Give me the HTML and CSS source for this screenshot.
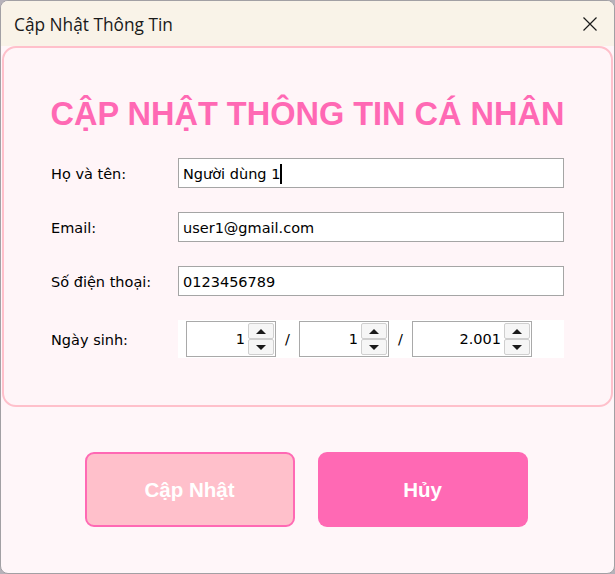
FILE: index.html
```html
<!DOCTYPE html>
<html lang="vi">
<head>
<meta charset="utf-8">
<title>Cập Nhật Thông Tin</title>
<link rel="stylesheet" href="styles.css">
</head>
<body>
<div class="window">
  <div class="titlebar">
    <span class="title">Cập Nhật Thông Tin</span>
    <svg class="close" width="14" height="14" viewBox="0 0 14 14"><path d="M0.5 0.5 L13.5 13.5 M13.5 0.5 L0.5 13.5" stroke="#1a1a1a" stroke-width="1.2" fill="none"/></svg>
  </div>
  <div class="panel">
    <h1 class="heading">CẬP NHẬT THÔNG TIN CÁ NHÂN</h1>
    <div class="form">
      <div class="label">Họ và tên:</div>
      <div class="field">Người dùng 1<span class="caret"></span></div>
      <div class="label">Email:</div>
      <div class="field">user1@gmail.com</div>
      <div class="label">Số điện thoại:</div>
      <div class="field">0123456789</div>
      <div class="label">Ngày sinh:</div>
      <div class="date">
        <div class="spin spin-day"><span class="num">1</span><div class="btns"><div class="btn"><span class="tri-up"></span></div><div class="btn"><span class="tri-down"></span></div></div></div>
        <span class="slash">/</span>
        <div class="spin spin-month"><span class="num">1</span><div class="btns"><div class="btn"><span class="tri-up"></span></div><div class="btn"><span class="tri-down"></span></div></div></div>
        <span class="slash">/</span>
        <div class="spin spin-year"><span class="num">2.001</span><div class="btns"><div class="btn"><span class="tri-up"></span></div><div class="btn"><span class="tri-down"></span></div></div></div>
      </div>
    </div>
  </div>
  <div class="actions">
    <button class="action action-update">Cập Nhật</button>
    <button class="action action-cancel">Hủy</button>
  </div>
</div>
</body>
</html>
```

FILE: styles.css
```css
* { box-sizing: border-box; }
html, body { margin: 0; padding: 0; }
body {
  background: #b6b2ba;
  width: 615px;
  height: 574px;
  overflow: hidden;
}
.window {
  width: 615px;
  height: 574px;
  border: 1px solid #a2a0a4;
  border-radius: 8px;
  overflow: hidden;
  background: #fff6f9;
  display: flex;
  flex-direction: column;
}
.titlebar {
  height: 45px;
  flex: none;
  background: #f9f3e8;
  display: flex;
  align-items: center;
  justify-content: space-between;
  padding: 1px 17px 0 13px;
}
.title {
  font-family: "Open Sans", "Noto Sans", sans-serif;
  font-size: 17.3px;
  color: #1a1a1a;
}
.close { display: block; }
.panel {
  margin: 0 1px;
  height: 361px;
  flex: none;
  border: 2px solid #ffc0cb;
  border-radius: 14px;
  background: #fff5f8;
  padding: 46px 0 0 47px;
}
.heading {
  margin: 0 0 24px -47px;
  font-family: "Liberation Sans", Arial, sans-serif;
  font-weight: bold;
  font-size: 32.5px;
  line-height: 40px;
  color: #ff69b4;
  text-align: center;
}
.form {
  display: grid;
  grid-template-columns: 127px 386px;
  grid-template-rows: 30px 30px 30px 38px;
  row-gap: 24px;
  align-items: center;
  font-family: "DejaVu Sans", sans-serif;
  font-size: 14.5px;
  color: #000;
}
.label { white-space: nowrap; padding-top: 1px; }
.field {
  height: 30px;
  border: 1px solid #a5a5a5;
  background: #fff;
  padding: 1px 0 0 4px;
  display: flex;
  align-items: center;
  white-space: nowrap;
}
.caret {
  display: inline-block;
  width: 1.5px;
  height: 20px;
  background: #000;
}
.date {
  height: 38px;
  background: #fff;
  display: flex;
  align-items: center;
  padding-left: 8px;
}
.spin {
  height: 36px;
  border: 1px solid #a9a9a9;
  background: #fff;
  display: flex;
  align-items: center;
  justify-content: flex-end;
  padding: 1px 1px 1px 0;
}
.spin-day { width: 90px; }
.spin-month { width: 90px; }
.spin-year { width: 120px; }
.num { margin-right: 3px; }
.slash {
  width: 23px;
  text-align: center;
}
.btns {
  width: 26px;
  height: 32px;
  display: flex;
  flex-direction: column;
}
.btn {
  flex: 1;
  background: #f6f6f6;
  border: 1px solid #cfcfcf;
  border-radius: 2px;
  display: flex;
  align-items: center;
  justify-content: center;
}
.tri-up, .tri-down {
  width: 0;
  height: 0;
  border-left: 5px solid transparent;
  border-right: 5px solid transparent;
}
.tri-up { border-bottom: 5px solid #1a1a1a; }
.tri-down { border-top: 5px solid #1a1a1a; }
.actions {
  margin-top: 45px;
  display: flex;
  justify-content: center;
  gap: 23px;
  padding-right: 3px;
}
.action {
  width: 210px;
  height: 75px;
  border-radius: 9px;
  font-family: "Liberation Sans", Arial, sans-serif;
  font-weight: bold;
  font-size: 20.5px;
  color: #fff;
  padding: 0;
}
.action-update {
  background: #ffc0cb;
  border: 2px solid #ff69b4;
}
.action-cancel {
  background: #ff69b4;
  border: none;
}
```
